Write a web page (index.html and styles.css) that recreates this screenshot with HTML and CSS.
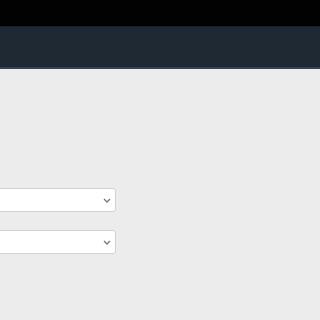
FILE: index.html
```html
<!DOCTYPE html>
<html>
<head>
<meta charset="utf-8">
<link rel="stylesheet" href="styles.css">
</head>
<body>
<div class="topbar"></div>
<header class="navbar"></header>
<main class="content">
  <div class="field">
    <div class="select">
      <svg class="chev" width="8" height="5" viewBox="0 0 8 5"><path d="M1 1 L4 4 L7 1" fill="none" stroke="#777" stroke-width="1.3"/></svg>
    </div>
  </div>
  <div class="field">
    <div class="select">
      <svg class="chev" width="8" height="5" viewBox="0 0 8 5"><path d="M1 1 L4 4 L7 1" fill="none" stroke="#777" stroke-width="1.3"/></svg>
    </div>
  </div>
</main>
</body>
</html>
```
FILE: styles.css
```css
html, body {
  margin: 0;
  padding: 0;
  width: 320px;
  height: 320px;
  overflow: hidden;
  background: #ececec;
  font-family: "Liberation Sans", Arial, sans-serif;
}
.topbar {
  height: 26px;
  background: #020203;
  border-bottom: 1px solid #1a2029;
}
.navbar {
  height: 40px;
  background: #1f2933;
  border-bottom: 2px solid #39424b;
}
.content {
  padding-top: 119px;
  display: flex;
  flex-direction: column;
  gap: 18px;
}
.field {
  width: 126px;
  margin-left: -10px;
}
.select {
  height: 22px;
  background: #fff;
  border: 1px solid #d2d2d2;
  border-radius: 3px;
  display: flex;
  align-items: center;
  justify-content: flex-end;
  padding-right: 4px;
  box-sizing: content-box;
}
.chev { display: block; }
```
